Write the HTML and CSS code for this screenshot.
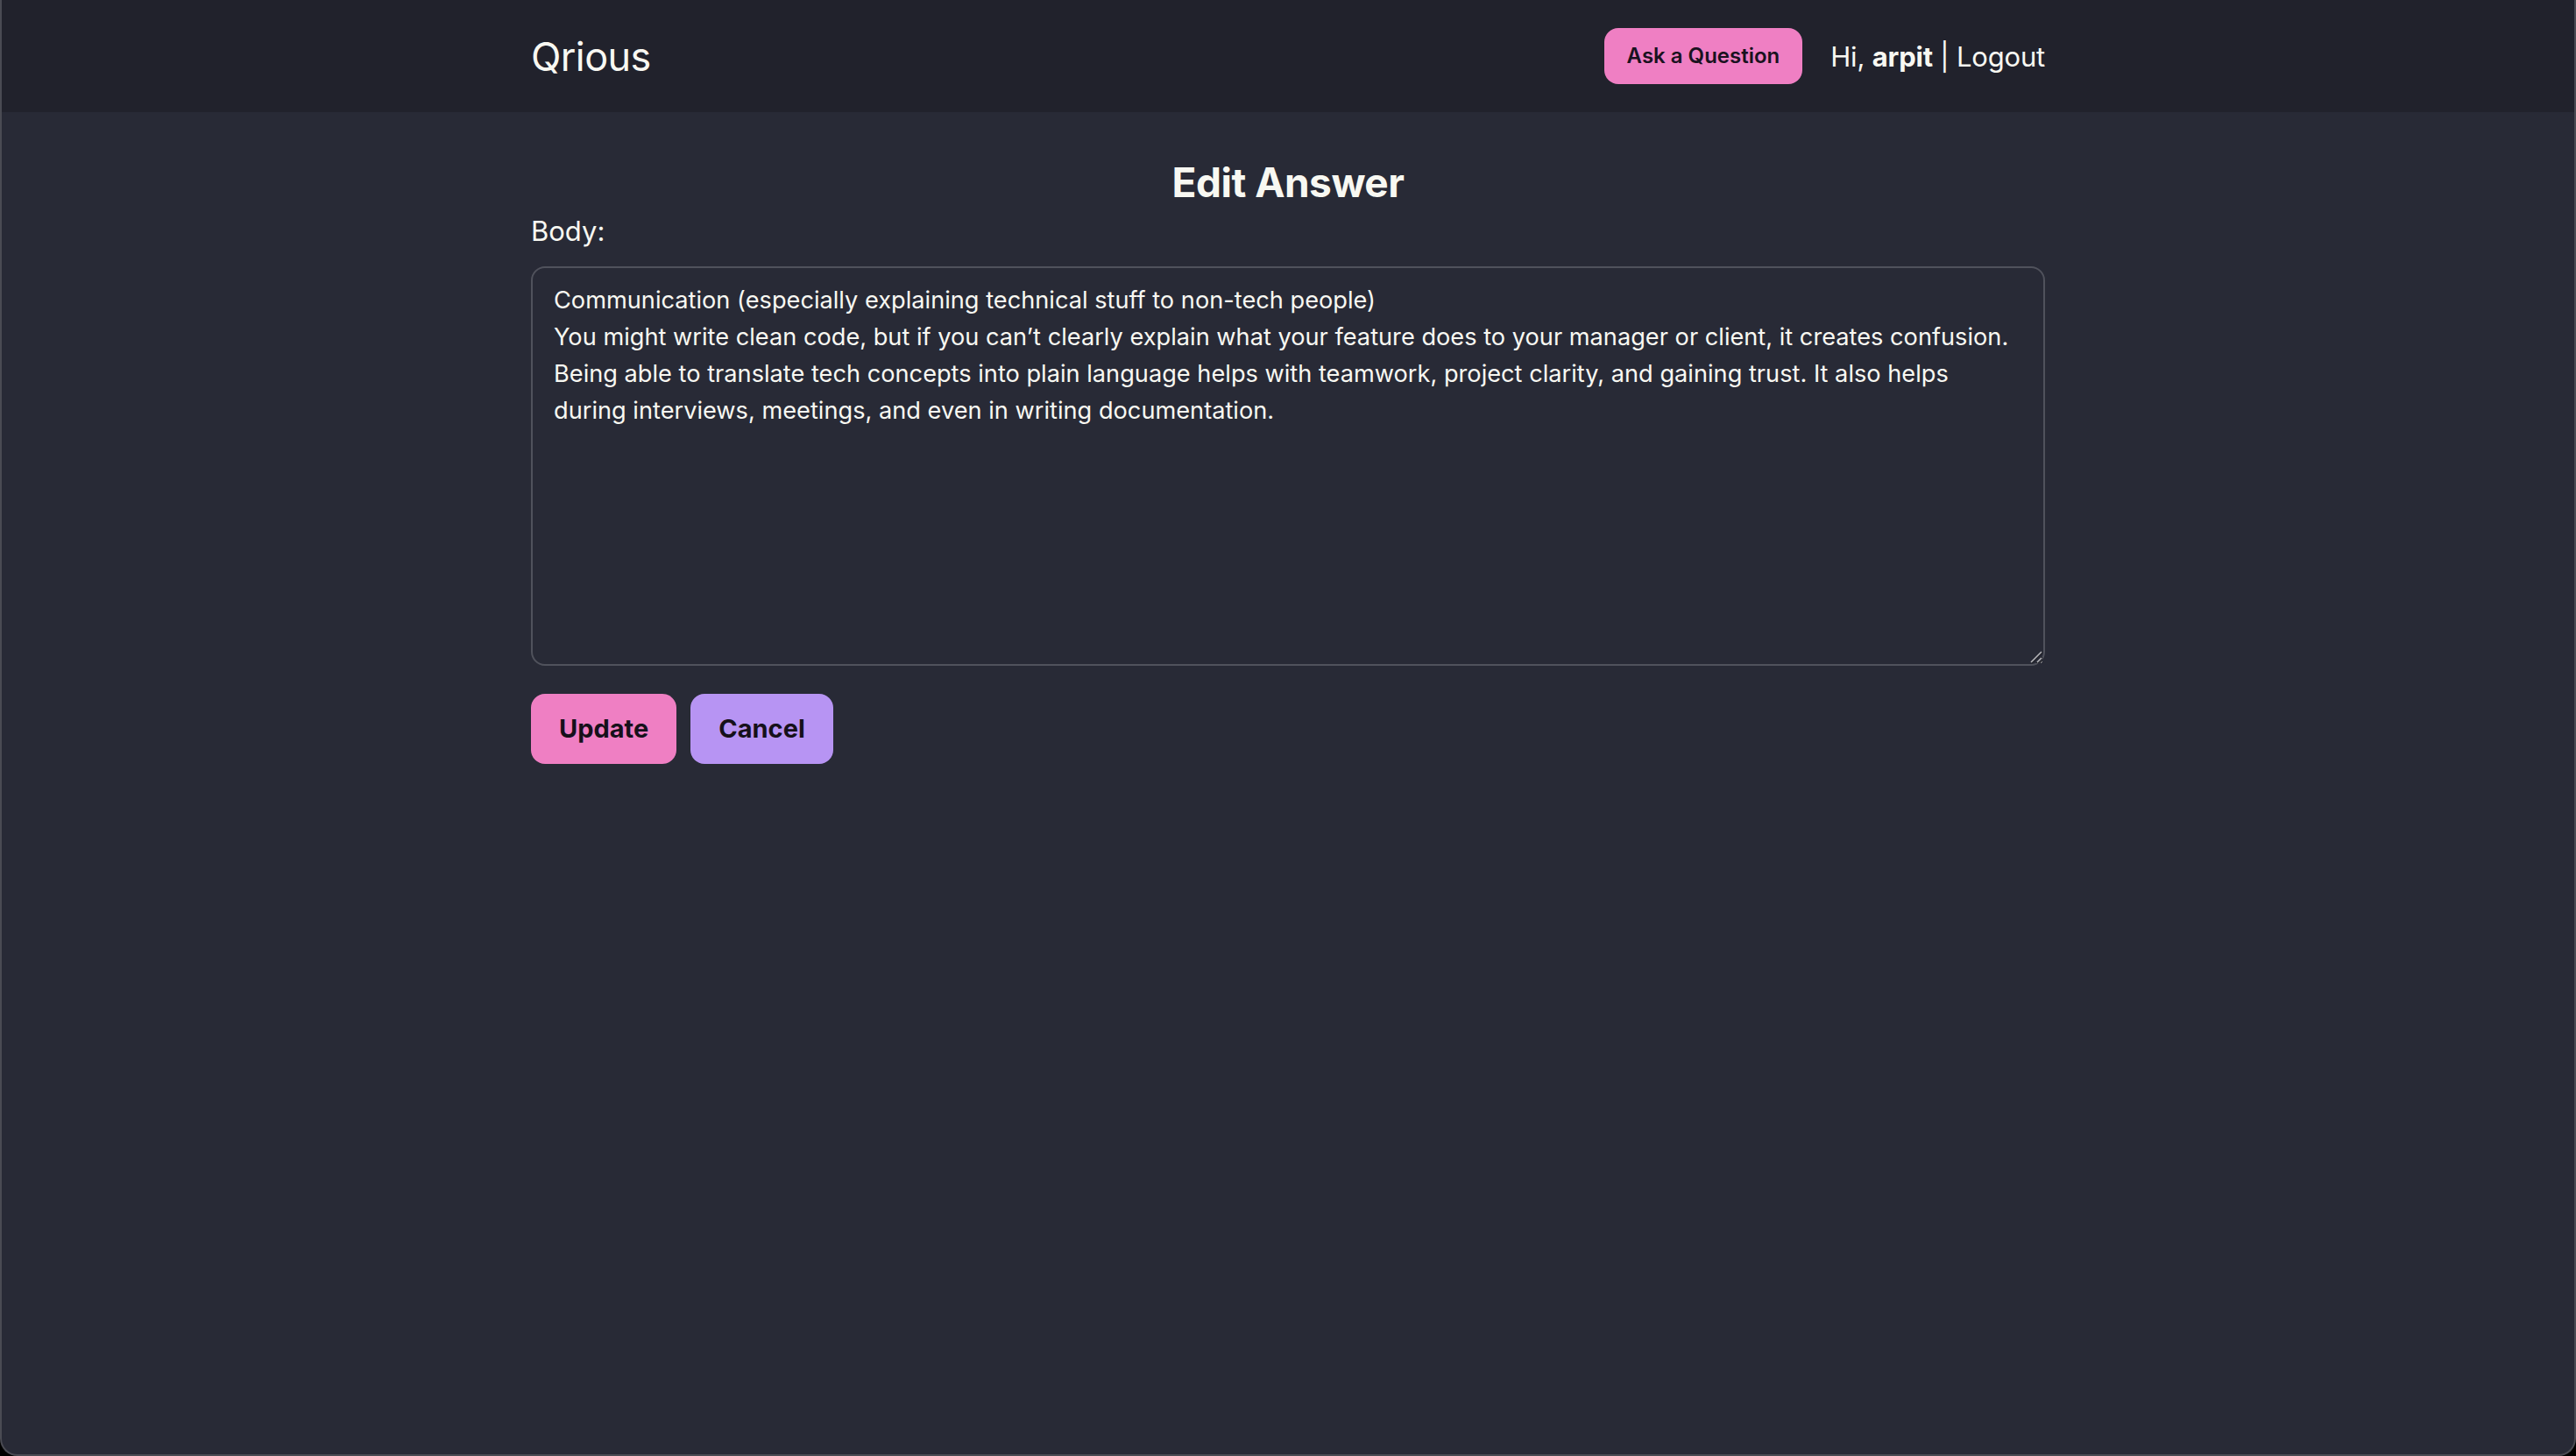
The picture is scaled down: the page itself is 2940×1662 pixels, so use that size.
FILE: index.html
```html
<!DOCTYPE html>
<html lang="en">
<head>
<meta charset="utf-8">
<title>Edit Answer - Qrious</title>
<link rel="stylesheet" href="styles.css">
</head>
<body>
<div class="frame">
  <header class="topbar">
    <div class="container topbar-inner">
      <a class="brand" href="#">Qrious</a>
      <nav class="nav">
        <a class="btn-ask" href="#">Ask a Question</a>
        <span class="greet">Hi, <strong>arpit</strong> | <a href="#" class="logout">Logout</a></span>
      </nav>
    </div>
  </header>
  <main class="container main">
    <h1 class="title">Edit Answer</h1>
    <form class="form">
      <label class="label" for="body">Body:</label>
      <div class="field">
        <textarea id="body" class="body-input" rows="10" wrap="off">Communication (especially explaining technical stuff to non-tech people)
You might write clean code, but if you can’t clearly explain what your feature does to your manager or client, it creates confusion.
Being able to translate tech concepts into plain language helps with teamwork, project clarity, and gaining trust. It also helps
during interviews, meetings, and even in writing documentation.</textarea>
        <svg class="grip" width="16" height="16" viewBox="0 0 16 16" aria-hidden="true">
          <path d="M2.5 15 L15 2.5 M9.5 15 L15 9.5" stroke="#1c1d24" stroke-width="1.6" fill="none"/>
          <path d="M2 14 L14 2 M9 14 L14 9" stroke="#b4b4b8" stroke-width="1.6" fill="none"/>
        </svg>
      </div>
      <div class="actions">
        <button type="submit" class="btn btn-update">Update</button>
        <a href="#" class="btn btn-cancel">Cancel</a>
      </div>
    </form>
  </main>
</div>
</body>
</html>
```

FILE: styles.css
```css
html {
  background: #000;
}
body {
  margin: 0;
  font-family: Inter, "Liberation Sans", sans-serif;
  color: #f8f8f2;
}
.frame {
  box-sizing: border-box;
  height: 1662px;
  background: #282a36;
  border: 2px solid #4a4b53;
  border-top: 0;
  border-radius: 0 0 20px 20px;
  overflow: hidden;
}
.container {
  max-width: 1728px;
  margin: 0 auto;
}
.topbar {
  background: #21222c;
  height: 128px;
}
.topbar-inner {
  height: 100%;
  display: flex;
  align-items: center;
  justify-content: space-between;
}
.brand {
  color: #f8f8f2;
  text-decoration: none;
  font-size: 45px;
  letter-spacing: -0.6px;
  font-weight: 400;
}
.nav {
  display: flex;
  align-items: center;
  gap: 32px;
}
.btn-ask {
  display: inline-block;
  background: #ef7fc3;
  color: #1a1220;
  text-decoration: none;
  font-size: 24px;
  line-height: 32px;
  font-weight: 600;
  padding: 16px 26px;
  border-radius: 16px;
}
.greet {
  font-size: 31px;
  letter-spacing: -0.2px;
}
.greet strong {
  font-weight: 700;
}
.logout {
  color: #f8f8f2;
  text-decoration: none;
}
.main {
  padding-top: 48px;
}
.title {
  margin: 0;
  text-align: center;
  font-size: 46px;
  line-height: 64px;
  font-weight: 700;
  letter-spacing: -0.5px;
}
.form {
  display: flex;
  flex-direction: column;
  align-items: flex-start;
}
.label {
  font-size: 31px;
  line-height: 48px;
  margin-bottom: 16px;
}
.field {
  position: relative;
  width: 100%;
  margin-bottom: 32px;
}
.body-input {
  display: block;
  box-sizing: border-box;
  width: 100%;
  margin: 0;
  padding: 16px 24px;
  border: 2px solid #50525c;
  border-radius: 16px;
  background: #282a36;
  color: #f8f8f2;
  font-family: Inter, "Liberation Sans", sans-serif;
  font-size: 27.2px;
  line-height: 42px;
  overflow: auto;
  resize: both;
  color-scheme: dark;
  outline: none;
}
.grip {
  position: absolute;
  right: 2px;
  bottom: 2px;
  pointer-events: none;
}
.actions {
  display: flex;
  gap: 16px;
}
.btn {
  display: inline-block;
  border: 0;
  font-family: Inter, "Liberation Sans", sans-serif;
  font-size: 29px;
  line-height: 48px;
  font-weight: 700;
  padding: 16px 32px;
  border-radius: 16px;
  color: #16101a;
  text-decoration: none;
  cursor: pointer;
}
.btn-update {
  background: #ef7fc3;
}
.btn-cancel {
  background: #b794f3;
}
```
